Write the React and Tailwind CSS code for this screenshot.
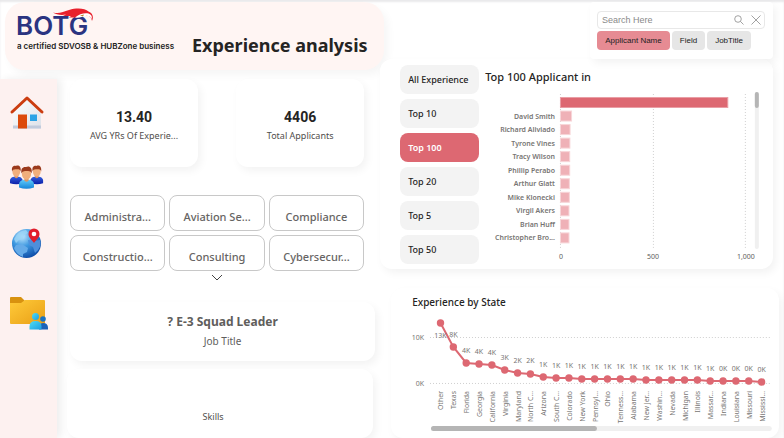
import React from "react";

const CARD = "bg-white shadow-[3px_4px_8px_rgba(0,0,0,0.05)]";

const fields = ["Administra...", "Aviation Se...", "Compliance", "Constructio...", "Consulting", "Cybersecur..."];
const ranges = ["All Experience", "Top 10", "Top 100", "Top 20", "Top 5", "Top 50"];

const applicants = [
  ["", 905],
  ["David Smith", 60],
  ["Richard Aliviado", 52],
  ["Tyrone Vines", 51],
  ["Tracy Wilson", 50],
  ["Phillip Perabo", 50],
  ["Arthur Glatt", 48],
  ["Mike Klonecki", 48],
  ["Virgil Akers", 46],
  ["Brian Huff", 46],
  ["Christopher Bro...", 46],
];

const states = [
  ["Other", "13K", 323, 338],
  ["Texas", "8K", 347, 337],
  ["Florida", "4K", 363, 353],
  ["Georgia", "4K", 364, 354],
  ["California", "4K", 365, 355],
  ["Virginia", "3K", 370, 360],
  ["Maryland", "2K", 373, 363],
  ["North C...", "2K", 374, 363],
  ["Arizona", "1K", 377, 367],
  ["South C...", "1K", 378, 368],
  ["Colorado", "1K", 378, 368],
  ["New York", "1K", 379, 369],
  ["Pennsyl...", "1K", 379, 369],
  ["Ohio", "1K", 379, 369],
  ["Tenness...", "1K", 379, 369],
  ["Alabama", "1K", 379, 369],
  ["New Jer...", "1K", 380, 370],
  ["Washin...", "1K", 380, 370],
  ["Nevada", "1K", 380, 370],
  ["Michigan", "1K", 380, 370],
  ["Illinois", "1K", 380, 370],
  ["Massar...", "1K", 381, 371],
  ["Indiana", "0K", 381, 371],
  ["Louisiana", "0K", 381, 371],
  ["Missouri", "0K", 381, 371],
  ["Mississi...", "0K", 382, 372],
];

function Logo() {
  return (
    <svg viewBox="0 0 166 44" className="w-[166px] h-[44px] shrink-0" role="img" aria-label="BOTG">
      <text x="-1" y="27" fill="#2b3481" fontSize="26" fontWeight="600" fontFamily="Inter, sans-serif">BOTG</text>
      <path d="M36 4.500 C42 6 46 4 52 2 C60 -.5 68 .2 71.500 3.500 C75.500 5 77 8.500 75 13 C74.500 9.500 72 7.500 69.500 7.500 C65 7.500 62 9 58 9.500 L52 9.500 L54 8 L46 8 L49 6.500 C44 7.500 39 6.500 36 4.500Z" fill="#e8202c" />
      <path d="M58 9.500 C62 5.800 68 4.500 71.500 5.500 C74.500 6.500 75.500 8.500 74.500 11 C73 8.300 71 7.500 68.500 8 C65 8.500 62.500 10.500 58 9.500Z" fill="#fff" />
      <path d="M63 7.500l4-1-1 2z" fill="#b9822d" />
      <text x="0" y="41" fill="#222" fontSize="8" fontWeight="600" fontFamily="Inter, sans-serif">a certified SDVOSB &amp; HUBZone business</text>
    </svg>
  );
}

function HomeIcon() {
  return (
    <svg viewBox="0 0 36 36" className="w-9 h-9">
      <defs>
        <linearGradient id="wall" x2="1" y2="1"><stop stopColor="#fff" /><stop offset="1" stopColor="#dde1e8" /></linearGradient>
      </defs>
      <path d="M4 17.500 18 4l14 13.500V34.500H4z" fill="url(#wall)" />
      <path d="M4 31.500h28v3H4z" fill="#c2cbdc" />
      <path d="M9 20.500h9v14H9z" fill="#dc4a0c" />
      <path d="M21 20.500h7v6.500h-7z" fill="#2ba3e6" />
      <path d="M3 18 18 4l15 14" fill="none" stroke="#cb3d11" strokeWidth="3" strokeLinecap="round" strokeLinejoin="round" />
    </svg>
  );
}

function Person({ x, y, body, s }) {
  return (
    <g transform={`translate(${x} ${y}) scale(${s})`}>
      <path d="M0 21v-3c0-4 4-5 7.500-5s7.500 1 7.500 5v3q-7.500 2.500-15 0z" fill={body} />
      <path d="M5.500 11h4v3q-2 2.500-4 0z" fill="#dd9360" />
      <ellipse cx="7.500" cy="7.500" rx="4.600" ry="5.800" fill="#f0ae7c" />
      <path d="M2.500 7C1.500 2 4 0 7 .5c3-1.500 6.500 0 5.700 6.500-.8-2-2-2.600-4-2.500-2.500.2-5-.5-6.200 2.500z" fill="#9b3a1c" />
    </g>
  );
}

function PeopleIcon() {
  return (
    <svg viewBox="0 0 36 26" className="w-9 h-[26px]">
      <defs>
        <linearGradient id="navy" x2="0" y2="1"><stop stopColor="#345fe0" /><stop offset="1" stopColor="#0a1fa8" /></linearGradient>
        <linearGradient id="cyan" x2="0" y2="1"><stop stopColor="#63cdfb" /><stop offset="1" stopColor="#1484d8" /></linearGradient>
      </defs>
      <Person x={1} y={2.5} body="url(#navy)" s={0.84} />
      <Person x={21.5} y={2.5} body="url(#navy)" s={0.84} />
      <Person x={10} y={3.5} body="url(#cyan)" s={1} />
    </svg>
  );
}

function GlobeIcon() {
  return (
    <svg viewBox="0 0 32 32" className="w-8 h-8">
      <defs>
        <radialGradient id="sea" cx=".35" cy=".25" r=".8"><stop stopColor="#c4e9ff" /><stop offset=".45" stopColor="#3d98e0" /><stop offset="1" stopColor="#0c4aa6" /></radialGradient>
      </defs>
      <circle cx="15.500" cy="16.500" r="14.500" fill="url(#sea)" />
      <path d="M3 12q4-8 12-9l2 3-4 2-1 4-4 1-3 3z" fill="#9bd4f6" opacity=".8" />
      <path d="M5 18l6-1 6 4-1 4-4 2v3Q5 27 3 21z" fill="#64aae8" />
      <path d="M17 13l6 1 6-1q2 8-5 13l-2-6-4-2z" fill="#4e8fdb" />
      <path d="M23 16c-3-4-5.500-5.500-5.500-9a5.500 5.500 0 0 1 11 0c0 3.500-2.500 5-5.500 9z" fill="#e11d2b" />
      <circle cx="23" cy="7" r="2.300" fill="#fff" />
    </svg>
  );
}

function FolderIcon() {
  return (
    <svg viewBox="0 0 40 34" className="w-10 h-[34px]">
      <defs>
        <linearGradient id="folder" x2="1" y2="1"><stop stopColor="#ffcb3a" /><stop offset="1" stopColor="#e99f16" /></linearGradient>
        <linearGradient id="teal" x2="1" y2="1"><stop stopColor="#4fdcf3" /><stop offset="1" stopColor="#1b9ee0" /></linearGradient>
      </defs>
      <path d="M1 2q0-1 1-1h10l4 4H35v5H1z" fill="#d8920f" />
      <path d="M1 7h11l4-3h19q1 0 1 1v22q0 1-1 1H2q-1 0-1-1z" fill="url(#folder)" />
      <circle cx="34" cy="23" r="2.800" fill="#1872c4" />
      <path d="M30 33.500v-3q1-3.500 4-3.500 5 0 5 5v1.500z" fill="#1b62b8" />
      <circle cx="26.500" cy="20.500" r="3.500" fill="url(#teal)" />
      <path d="M20.500 33.500v-3q0-5.500 6-5.500t6 5.500v3z" fill="url(#teal)" />
    </svg>
  );
}

function BarChart() {
  return (
    <svg viewBox="485 90 280 172" className="block w-full" role="img" aria-label="Top 100 applicants">
      <g stroke="#cfcfcf" strokeDasharray="1 2">
        <path d="M560.500 94V250M653.500 94V250M745.500 94V250" />
      </g>
      {applicants.map(([name, value], i) => (
        <g key={i}>
          <rect x="560.500" y={97.5 + i * 13.55} width={value * 0.185} height="10" fill={i ? "#efb1b7" : "#dd6872"} stroke={i ? "#f7d5d8" : "#e99ea5"} strokeWidth="1" />
          <text x="555" y={105 + i * 13.55} textAnchor="end" fontSize="7" fontWeight="600" fill="#777573">{name}</text>
        </g>
      ))}
      <g fontSize="7" fill="#605e5c" textAnchor="middle">
        <text x="561" y="259">0</text>
        <text x="653" y="259">500</text>
        <text x="746" y="259">1,000</text>
      </g>
      <rect x="755" y="92" width="4" height="157" rx="2" fill="#f0f0f0" />
      <rect x="755" y="92" width="4" height="16" rx="2" fill="#b5b5b5" />
    </svg>
  );
}

const stateX = (i) => 440.5 + i * 12.85;

function LineChart() {
  return (
    <svg viewBox="404 312 375 120" className="block w-full" role="img" aria-label="Experience by state">
      <path d="M430 337.500H771M430 383.500H771" stroke="#cfcfcf" strokeDasharray="1 2" />
      <g fontSize="7" fill="#777573">
        <text x="424" y="340" textAnchor="end">10K</text>
        <text x="424" y="386" textAnchor="end">0K</text>
      </g>
      <polyline points={states.map((s, i) => `${stateX(i)},${s[2]}`).join(" ")} fill="none" stroke="#dd6872" strokeWidth="2" />
      {states.map(([name, label, y, labelY], i) => (
        <g key={name} fontSize="7" fill="#777573">
          <circle cx={stateX(i)} cy={y} r="3.700" fill="#dd6872" />
          <text x={stateX(i)} y={labelY} textAnchor="middle">{label}</text>
          <text transform={`translate(${stateX(i) + 3} 391) rotate(-90)`} textAnchor="end">{name}</text>
        </g>
      ))}
      <rect x="431" y="426" width="341" height="5" rx="2.500" fill="#f0f0f0" />
      <rect x="431" y="426" width="166" height="5" rx="2.500" fill="#b5b5b5" />
    </svg>
  );
}

export default function App() {
  return (
    <div className="flex min-h-screen bg-white pt-0.5 text-[#252423] font-['Noto_Sans',sans-serif] shadow-[inset_0_2px_2px_#e9e9eb]">
      <div className="flex w-[49%] flex-col">
        <header className="ml-[5px] flex h-[68px] items-start rounded-[20px] bg-[#fff5f3] pl-3 pt-[6px] shadow-[4px_5px_8px_rgba(0,0,0,0.04)]">
          <Logo />
          <h1 className="ml-[9px] mt-[23px] whitespace-nowrap text-[18px] leading-7 font-bold">Experience analysis</h1>
        </header>

        <div className="mt-[9px] flex flex-1">
          <nav className="flex w-[57px] shrink-0 flex-col items-center bg-[#fdf1f0] pt-[15px] shadow-[4px_0_8px_rgba(0,0,0,0.07)]">
            <a href="#home" aria-label="Home" className="ml-[-4px] block"><HomeIcon /></a>
            <a href="#people" aria-label="People" className="mt-[33px] ml-[-4px] block"><PeopleIcon /></a>
            <a href="#map" aria-label="Map" className="mt-[38px] ml-[-4px] block"><GlobeIcon /></a>
            <a href="#records" aria-label="Records" className="mt-[37px] block"><FolderIcon /></a>
          </nav>

          <main className="ml-[13px] mr-[9px] flex flex-1 flex-col">
            <div className="mr-[11px] flex justify-between">
              <div className={`${CARD} h-[88px] w-[128px] rounded-xl pt-7 text-center`}>
                <div className="font-['Roboto',sans-serif] text-[14px] leading-5 font-bold">13.40</div>
                <div className="text-[9px] leading-[18px] text-[#504e4c]">AVG YRs Of Experie...</div>
              </div>
              <div className={`${CARD} h-[88px] w-[128px] rounded-xl pt-7 text-center`}>
                <div className="font-['Roboto',sans-serif] text-[14px] leading-5 font-bold">4406</div>
                <div className="text-[9px] leading-[18px] text-[#504e4c]">Total Applicants</div>
              </div>
            </div>

            <div className="mt-7 mr-[11px] grid grid-cols-3 gap-1">
              {fields.map((f) => (
                <button key={f} className="h-9 rounded-lg border border-[#c8c8c8] pt-2 text-center text-[11px] leading-4 font-medium text-[#666463]">{f}</button>
              ))}
            </div>
            <button aria-label="More fields" className="mt-[2px] mr-[11px] flex h-2 items-center justify-center">
              <svg viewBox="0 0 12 7" className="h-[7px] w-3"><path d="M1 1l5 5 5-5" fill="none" stroke="#444" /></svg>
            </button>

            <div className={`${CARD} mt-[21px] h-[59px] rounded-xl pt-[10px] text-center text-[#605e5c]`}>
              <div className="text-[12px] leading-5 font-bold">? E-3 Squad Leader</div>
              <div className="text-[10px] leading-[18px]">Job Title</div>
            </div>
            <div className={`${CARD} mt-2 ml-[-3px] mr-[2px] flex-1 rounded-xl pt-[39px] text-center text-[9px] leading-[18px] text-[#504e4c]`}>
              <div className="pr-[14px]">Skills</div>
            </div>
          </main>
        </div>
      </div>

      <div className="flex flex-1 flex-col pr-[5px]">
        <form className="relative mr-[6px] flex h-[57px] w-[183px] flex-col gap-0.5 self-end rounded bg-white pt-[9px] pl-[7px] shadow-[3px_4px_8px_rgba(0,0,0,0.05)] font-['Liberation_Sans',sans-serif]">
          <div className="mr-[8px] flex h-[18px] items-center rounded border border-[#e8e8e8] pr-[3px] pl-1">
            <input aria-label="Search applicants" placeholder="Search Here" className="w-0 flex-1 text-[9px] leading-4 outline-none placeholder:text-[#8a8a8a]" />
            <button type="button" aria-label="Search"><svg viewBox="0 0 10 10" className="h-[10px] w-[10px]"><g fill="none" stroke="#8a8a8a" strokeWidth=".8"><circle cx="4" cy="4" r="3.300" /><path d="M6.500 6.500 9.500 9.500" /></g></svg></button>
            <button type="button" aria-label="Clear" className="ml-[7px]"><svg viewBox="0 0 10 10" className="h-[10px] w-[10px]"><path d="M.5.5l9 9M9.500.5l-9 9" stroke="#8a8a8a" strokeWidth=".8" /></svg></button>
          </div>
          <div className="flex gap-0.5 text-[8px] leading-[19px] text-[#222]">
            <button type="button" className="w-[73px] rounded bg-[#e68b93]">Applicant Name</button>
            <button type="button" className="w-[33px] rounded bg-[#e6e6e6]">Field</button>
            <button type="button" className="w-[44px] rounded bg-[#e6e6e6]">JobTitle</button>
          </div>
        </form>

        <section className={`${CARD} mr-[6px] ml-[-4px] flex h-[210px] rounded-xl pt-[6px] pl-5`}>
          <div className="flex w-[79px] shrink-0 flex-col gap-[5px]">
            {ranges.map((r) => (
              <button
                key={r}
                className={r === "Top 100"
                  ? "h-[29px] rounded-lg bg-[#dd6872] pl-2 text-left text-[9px] font-semibold text-white"
                  : "h-[29px] rounded-lg bg-[#f3f3f3] pl-2 text-left text-[9px] font-medium"}
              >
                {r}
              </button>
            ))}
          </div>
          <div className="ml-[6px] mr-2 flex-1">
            <h2 className="h-[25px] text-[11px] leading-6 font-medium">Top 100 Applicant in</h2>
            <BarChart />
          </div>
        </section>

        <section className={`${CARD} mt-[19px] ml-[7px] flex-1 rounded-xl pt-1`}>
          <h2 className="pl-[21px] text-[10px] leading-5 font-medium">Experience by State</h2>
          <div className="pl-[13px]">
            <LineChart />
          </div>
        </section>
      </div>
    </div>
  );
}
